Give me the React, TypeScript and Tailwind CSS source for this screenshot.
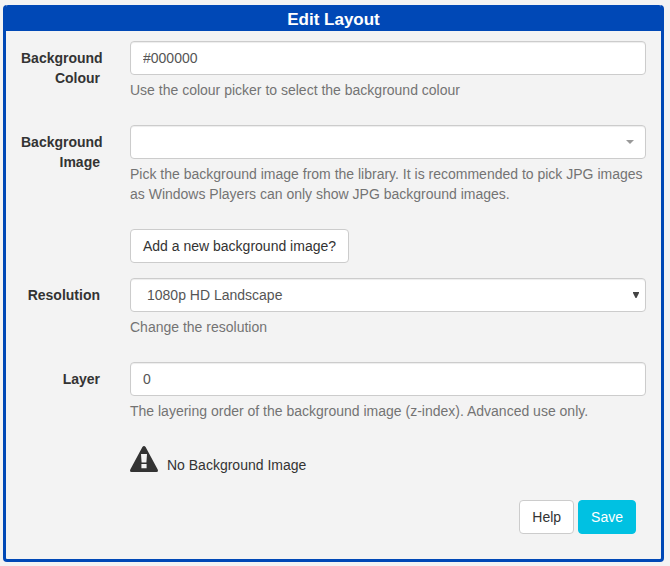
import type { JSX, ReactNode } from "react";

type FieldProps = {
  label?: string;
  help?: string;
  children: ReactNode;
};

const controlClass =
  "block w-full h-[34px] px-3 py-1.5 bg-white border border-[#ccc] rounded text-[#555] leading-5 shadow-[inset_0_1px_1px_rgba(0,0,0,0.075)] outline-none";

const buttonClass = "h-[34px] px-3 border rounded leading-5 whitespace-nowrap";

const Field = ({ label, help, children }: FieldProps): JSX.Element => (
  <div className="flex gap-[30px] mb-[15px]">
    <label className="w-[79px] shrink-0 pt-[7px] text-right font-bold">{label}</label>
    <div className="w-[516px]">
      {children}
      {help && <span className="block mt-[5px] mb-2.5 text-[#737373]">{help}</span>}
    </div>
  </div>
);

const WarningIcon = (): JSX.Element => (
  <svg width="28" height="26" viewBox="0 0 28 26" className="shrink-0">
    <path
      fill="#333"
      fillRule="evenodd"
      d="M12.4 1Q14 -1 15.6 1L27.7 23.6Q28.6 26 26.5 26H1.5Q-0.6 26 0.3 23.6ZM11 8L11.6 16.5H16.4L17 8ZM11.4 18V22.3H16.6V18Z"
    />
  </svg>
);

const App = (): JSX.Element => {
  return (
    <div className="h-[566px] w-[670px] bg-[#f3f3f3] pt-[5px] pl-[3px] font-['Liberation_Sans',Arial,sans-serif] text-[14px] leading-5 text-[#333]">
      <div className="w-[661px] h-[557px] border-[3px] border-t-0 border-[#0048b6] rounded bg-[#f3f3f3]">
        <h4 className="h-[26px] rounded-t-[2px] bg-[#0048b6] text-center text-[17px] leading-[30px] font-bold text-white">
          Edit Layout
        </h4>

        <form className="pt-2.5 pl-[15px]" onSubmit={(e) => e.preventDefault()}>
          <Field label="Background Colour" help="Use the colour picker to select the background colour">
            <input className={controlClass} type="text" defaultValue="#000000" />
          </Field>

          <Field
            label="Background Image"
            help="Pick the background image from the library. It is recommended to pick JPG images as Windows Players can only show JPG background images."
          >
            <div className={`${controlClass} flex items-center justify-end pr-[11px]`}>
              <span className="border-x-4 border-t-4 border-x-transparent border-t-[#999]" />
            </div>
          </Field>

          <Field>
            <button type="button" className={`${buttonClass} block bg-white border-[#ccc]`}>
              Add a new background image?
            </button>
          </Field>

          <Field label="Resolution" help="Change the resolution">
            <div className={`${controlClass} flex items-center justify-between pl-4 pr-[6px]`}>
              <span>1080p HD Landscape</span>
              <svg width="6" height="6" viewBox="0 0 6 6">
                <path d="M0 0H6V1L3.5 6H2.5L0 1Z" fill="#444" />
              </svg>
            </div>
          </Field>

          <Field label="Layer" help="The layering order of the background image (z-index). Advanced use only.">
            <input className={controlClass} type="text" defaultValue="0" />
          </Field>

          <Field>
            <div className="flex items-start gap-[9px] h-[39px]">
              <WarningIcon />
              <span className="mt-[9px]">No Background Image</span>
            </div>
          </Field>

          <div className="flex justify-end gap-1 pr-[25px]">
            <button type="button" className={`${buttonClass} bg-white border-[#ccc]`}>
              Help
            </button>
            <button type="submit" className={`${buttonClass} bg-[#00c1e2] border-[#00c1e2] text-white`}>
              Save
            </button>
          </div>
        </form>
      </div>
    </div>
  );
};

export default App;
